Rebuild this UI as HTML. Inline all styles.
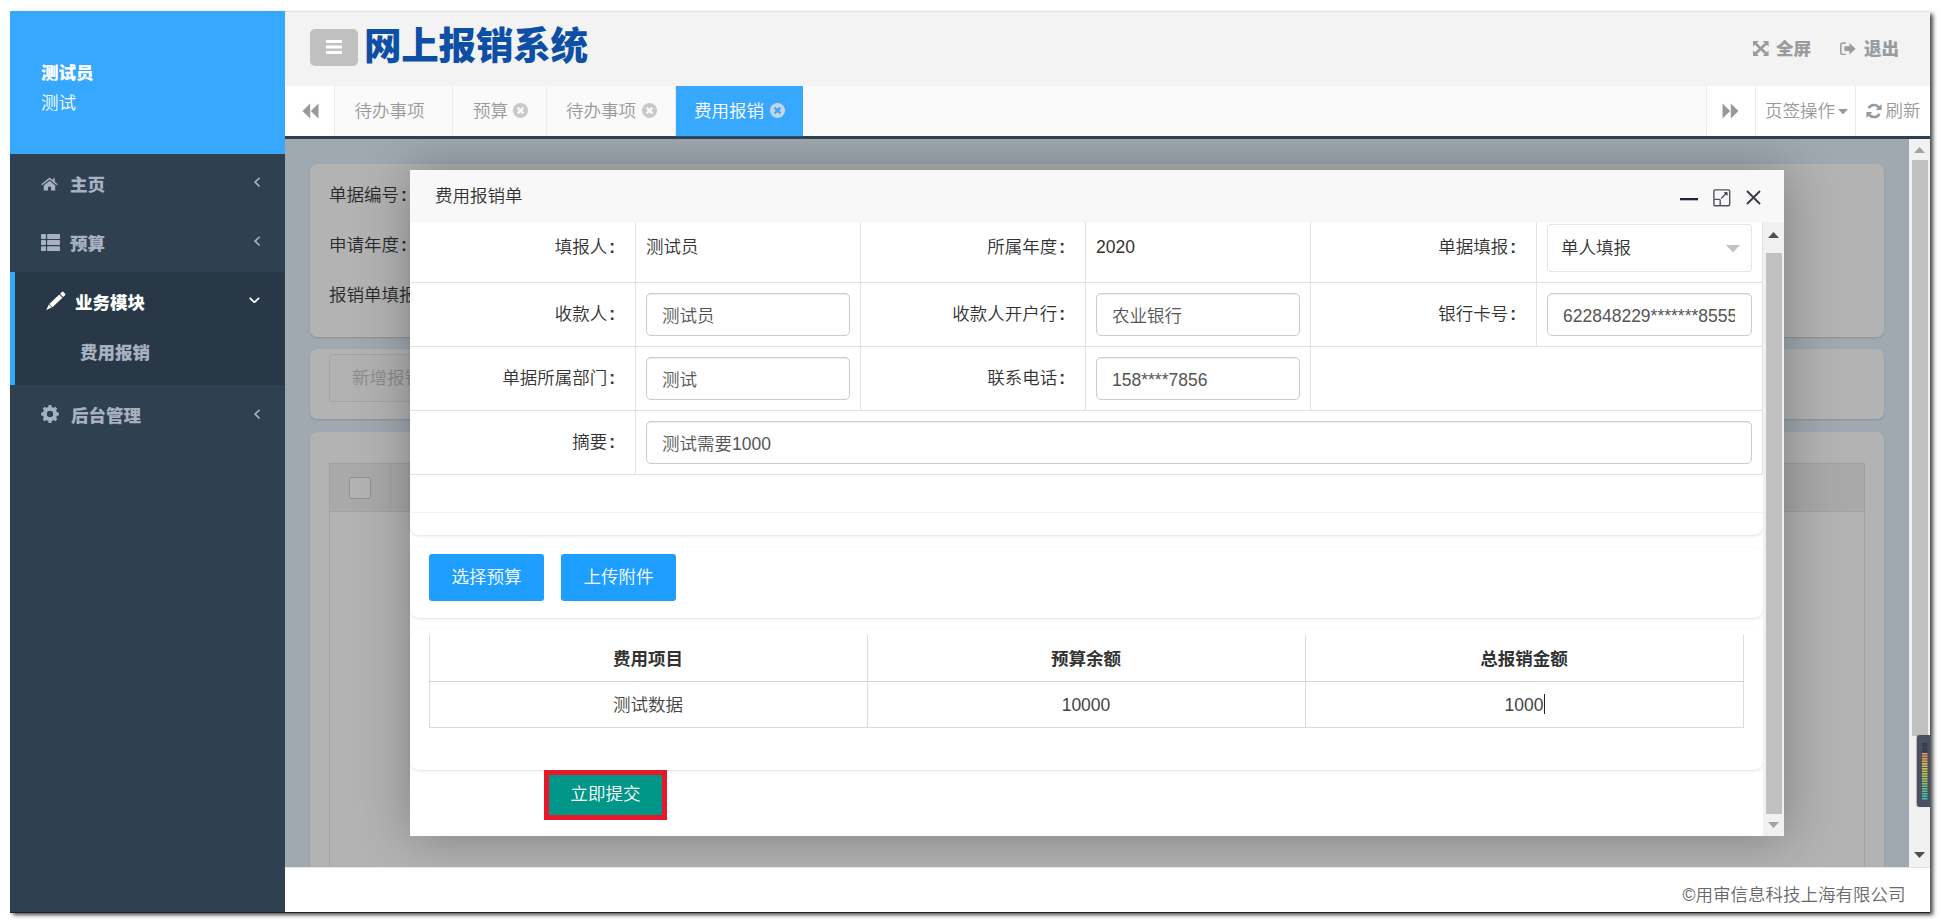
<!DOCTYPE html>
<html lang="zh-CN">
<head>
<meta charset="utf-8">
<title>网上报销系统</title>
<style>
*{box-sizing:border-box;margin:0;padding:0}
html,body{width:1941px;height:924px;overflow:hidden;background:#fff}
body{font-family:"Liberation Sans","Noto Sans CJK SC",sans-serif;font-size:17.5px;font-weight:350;color:#333;position:relative}
.abs{position:absolute}
#shot{position:absolute;left:10px;top:11px;width:1920px;height:901px;background:#fff;box-shadow:0 1px 0 #1d2327,3px 3px 4px 0 rgba(0,0,0,.72);overflow:hidden}
/* coordinates inside #shot are page coords minus (10,11) */
#side{left:0;top:0;width:275px;height:901px;background:#2f4050}
#prof{left:0;top:0;width:275px;height:143px;background:#36a9ff;color:#fff}
#prof b{position:absolute;left:31px;top:49px;line-height:26px;font-weight:900}
#prof span{position:absolute;left:31px;top:78.5px;line-height:26px}
.mi{left:0;width:275px;height:58px;color:#a7b1c2;font-weight:900;line-height:58px}
.mi svg{position:absolute}
.mi .t{position:absolute;top:0}
#act{left:0;top:261px;width:275px;height:113px;background:#293846;border-left:5px solid #36a9ff}
#head{left:275px;top:0;width:1645px;height:75px;background:#f3f3f4;border-top:1px solid #e2e2e2}
#burger{left:300px;top:18px;width:48px;height:37px;border-radius:5px;background:#c0c0c0}
#title{left:354px;top:9.5px;font-size:37.5px;line-height:50px;font-weight:900;color:#0e4fa6;white-space:nowrap;letter-spacing:-.2px}
.hr{color:#999c9e;font-weight:900;line-height:26px;white-space:nowrap}
#tabs{left:275px;top:75px;width:1645px;height:53px;background:#fafafa;border-bottom:3px solid #2f4050}
.tab{top:75px;height:50px;line-height:51px;color:#999;border-right:1px solid #ececec;white-space:nowrap}
.tabbtn{top:75px;height:50px;background:#fff}
#main{left:275px;top:128px;width:1624px;height:728px;background:#a0a8b0;overflow:hidden}
.card{background:#b3b3b3;border-radius:7px;box-shadow:0 1px 2px rgba(0,0,0,.14)}
#foot{left:275px;top:856px;width:1645px;height:45px;background:#fff;color:#676a6c;line-height:54px;text-align:right;padding-right:24.5px;border-top:1px solid #e4e4e4}
#vsb{left:1899px;top:128px;width:21px;height:728px;background:#f1f1f1}
#modal{left:125px;top:31px;width:1374px;height:666px;background:#fff;box-shadow:1px 1px 50px rgba(0,0,0,.3)}
#mtitle{left:0;top:0;width:1374px;height:53px;background:#f8f8f8;border-bottom:1px solid #eee;line-height:52px;padding-left:25px;color:#333}
.bl{color:#2a2a2a;line-height:26px;white-space:nowrap}

/* modal internals: coords relative to #modal (page x-410, y-170) */
.cd{position:absolute;left:0;width:1353px;background:#fff;border-radius:0 0 9px 9px;box-shadow:0 1px 3px 0 rgba(0,0,0,.13)}
.hl{position:absolute;left:0;width:1353px;height:1px;background:#e2e2e2}
.vl{position:absolute;width:1px;background:#e2e2e2}
.lb{position:absolute;width:205px;text-align:right;line-height:26px;color:#333;white-space:nowrap}
.vt{position:absolute;line-height:26px;color:#333;white-space:nowrap}
.in{position:absolute;width:204px;height:43px;border:1px solid #ccc;border-radius:5px;line-height:44px;padding-left:15px;color:#555;white-space:nowrap;overflow:hidden;box-shadow:inset 0 1px 1px rgba(0,0,0,.075);background:#fff}
.bt{position:absolute;top:384px;width:115px;height:47px;line-height:47px;text-align:center;background:#1e9fff;color:#fff;border-radius:3px;white-space:nowrap}
.th{position:absolute;top:465px;height:46px;line-height:48px;text-align:center;font-weight:700;color:#333}
.td{position:absolute;top:511px;height:46px;line-height:48px;text-align:center;color:#444}
i{font-style:normal;margin-left:2px;font-weight:700}
</style>
</head>
<body>
<div id="shot">
<div id="side" class="abs">
<div id="prof" class="abs"><b>测试员</b><span>测试</span></div>
<div class="mi abs" style="top:145px">
<svg style="left:31.4px;top:21px" width="17" height="14.2" viewBox="0 0 18 15"><path fill="#a7b1c2" d="M9 0.6 L0.3 7.6 L1.3 8.8 L9 2.6 L16.7 8.8 L17.7 7.6 L14.6 5.1 V1.4 H12.6 V3.5 Z M9 3.9 L2.9 8.9 V14.4 H7.4 V10.4 H10.6 V14.4 H15.1 V8.9 Z"/></svg>
<span class="t" style="left:60px">主页</span>
<svg style="left:244.2px;top:21.1px" width="6.4" height="10.2" viewBox="0 0 6.4 10.2"><path fill="none" stroke="#a7b1c2" stroke-width="1.6" d="M5.6 0.7 L1.1 5.1 L5.6 9.5"/></svg>
</div>
<div class="mi abs" style="top:203px">
<svg style="left:31px;top:20px" width="19" height="17.4" viewBox="0 0 19 17.4"><g fill="#a7b1c2"><rect x="0" y="0" width="5" height="5" rx=".9"/><rect x="6.1" y="0" width="12.9" height="5" rx=".9"/><rect x="0" y="6.1" width="5" height="5" rx=".9"/><rect x="6.1" y="6.1" width="12.9" height="5" rx=".9"/><rect x="0" y="12.2" width="5" height="5" rx=".9"/><rect x="6.1" y="12.2" width="12.9" height="5" rx=".9"/></g></svg>
<span class="t" style="left:60px;top:1px">预算</span>
<svg style="left:244.2px;top:22.1px" width="6.4" height="10.2" viewBox="0 0 6.4 10.2"><path fill="none" stroke="#a7b1c2" stroke-width="1.6" d="M5.6 0.7 L1.1 5.1 L5.6 9.5"/></svg>
</div>
<div id="act" class="abs"></div>
<div class="mi abs" style="top:263px;color:#fff">
<svg style="left:36px;top:17px;overflow:visible" width="21" height="20" viewBox="0 0 21 20"><g transform="translate(0.2,19) rotate(-43.5)" fill="#fff"><path d="M0 0 L5.7 -2.1 V2.1 Z"/><path fill="#293846" d="M0 0 L1.9 -.7 V.7 Z" opacity=".0"/><rect x="6.4" y="-2.3" width="13.8" height="4.6"/><rect x="21.1" y="-2.3" width="3.8" height="4.6" rx="1.1"/></g></svg>
<span class="t" style="left:65px">业务模块</span>
<svg style="left:239.4px;top:22.8px" width="10.8" height="6.4" viewBox="0 0 10.8 6.4"><path fill="none" stroke="#fff" stroke-width="1.7" d="M0.7 0.8 L5.4 5.4 L10.1 0.8"/></svg>
</div>
<div class="mi abs" style="top:317px;height:50px;line-height:50px"><span class="t" style="left:70px">费用报销</span></div>
<div class="mi abs" style="top:376px">
<svg style="left:31px;top:18px" width="18" height="18" viewBox="0 0 18 18"><path fill="#a7b1c2" fill-rule="evenodd" d="M7.10 2.50 L7.65 0.10 L10.35 0.10 L10.90 2.50 L12.25 3.06 L14.34 1.75 L16.25 3.66 L14.94 5.75 L15.50 7.10 L17.90 7.65 L17.90 10.35 L15.50 10.90 L14.94 12.25 L16.25 14.34 L14.34 16.25 L12.25 14.94 L10.90 15.50 L10.35 17.90 L7.65 17.90 L7.10 15.50 L5.75 14.94 L3.66 16.25 L1.75 14.34 L3.06 12.25 L2.50 10.90 L0.10 10.35 L0.10 7.65 L2.50 7.10 L3.06 5.75 L1.75 3.66 L3.66 1.75 L5.75 3.06 Z M9 5.8 A3.2 3.2 0 1 0 9 12.2 A3.2 3.2 0 1 0 9 5.8 Z"/><circle cx="9" cy="9" r="5.2" fill="none" stroke="#a7b1c2" stroke-width="3.6"/></svg>
<span class="t" style="left:61px">后台管理</span>
<svg style="left:244.2px;top:21.7px" width="6.4" height="10.2" viewBox="0 0 6.4 10.2"><path fill="none" stroke="#a7b1c2" stroke-width="1.6" d="M5.6 0.7 L1.1 5.1 L5.6 9.5"/></svg>
</div>
</div>
<div id="head" class="abs"></div>
<div id="burger" class="abs"><svg class="abs" style="left:16px;top:11px" width="16" height="14" viewBox="0 0 16 14"><path fill="#fff" d="M0 0H16V3H0Z M0 5.5H16V8.5H0Z M0 11H16V14H0Z"/></svg></div>
<div id="title" class="abs">网上报销系统</div>
<svg class="abs" style="left:1743px;top:30px" width="15.6" height="15" viewBox="0 0 16 16" preserveAspectRatio="none"><path fill="#999c9e" d="M0 0H6L4 2L8 6L12 2L10 0H16V6L14 4L10 8L14 12L16 10V16H10L12 14L8 10L4 14L6 16H0V10L2 12L6 8L2 4L0 6Z"/></svg>
<div class="hr abs" style="left:1766px;top:25px">全屏</div>
<svg class="abs" style="left:1830px;top:31px" width="16" height="13.4" viewBox="0 0 16 13.4"><path fill="none" stroke="#999c9e" stroke-width="1.5" d="M6 0.9H3A2.2 2.2 0 0 0 0.8 3.1V10.3A2.2 2.2 0 0 0 3 12.5H6"/><path fill="#999c9e" d="M4.4 4.3H9.4V1L15.6 6.7L9.4 12.4V9.1H4.4Z"/></svg>
<div class="hr abs" style="left:1854px;top:25px">退出</div>
<div id="tabs" class="abs"></div>
<div class="tabbtn abs" style="left:275px;width:50px;border-right:1px solid #ececec"><svg class="abs" style="left:17px;top:16.5px" width="17" height="16" viewBox="0 0 17 16"><path fill="#999" d="M8.2 0.5V15.5L0.5 8Z M16.5 0.5V15.5L8.8 8Z"/></svg></div>
<div class="tab abs" style="left:325px;width:118px;padding-left:19.5px">待办事项</div>
<div class="tab abs" style="left:443px;width:94px;padding-left:20px">预算</div>
<svg class="abs" style="left:502px;top:91px" width="17" height="17" viewBox="0 0 17 17"><circle cx="8.5" cy="8.5" r="7.6" fill="#c9c9c9"/><path stroke="#fafafa" stroke-width="2.2" stroke-linecap="butt" d="M5.6 5.6 L11.4 11.4 M11.4 5.6 L5.6 11.4"/></svg>
<div class="tab abs" style="left:537px;width:129px;padding-left:19px">待办事项</div>
<svg class="abs" style="left:631px;top:91px" width="17" height="17" viewBox="0 0 17 17"><circle cx="8.5" cy="8.5" r="7.6" fill="#c9c9c9"/><path stroke="#fafafa" stroke-width="2.2" stroke-linecap="butt" d="M5.6 5.6 L11.4 11.4 M11.4 5.6 L5.6 11.4"/></svg>
<div class="tab abs" style="left:666px;width:127px;padding-left:18px;background:#36a9ff;color:#fff;border-right:0">费用报销</div>
<svg class="abs" style="left:759px;top:91px" width="17" height="17" viewBox="0 0 17 17"><circle cx="8.5" cy="8.5" r="7.6" fill="#c4d4e2"/><path stroke="#36a9ff" stroke-width="2.2" stroke-linecap="butt" d="M5.6 5.6 L11.4 11.4 M11.4 5.6 L5.6 11.4"/></svg>
<div class="abs" style="left:666px;top:125px;width:127px;height:1px;background:#23527a"></div>
<div class="tabbtn abs" style="left:1696px;width:49px;border-left:1px solid #ececec"><svg class="abs" style="left:15px;top:17px" width="17" height="16" viewBox="0 0 17 16"><path fill="#999" d="M0.5 0.5V15.5L8.2 8Z M8.8 0.5V15.5L16.5 8Z"/></svg></div>
<div class="tabbtn abs" style="left:1745px;width:100px;border-left:1px solid #ececec;color:#999;line-height:51px;padding-left:9px">页签操作<svg class="abs" style="left:82px;top:23px" width="10" height="6" viewBox="0 0 10 6"><path fill="#999" d="M0 0H10L5 5.5Z"/></svg></div>
<div class="tabbtn abs" style="left:1845px;width:75px;border-left:1px solid #ececec;color:#999;line-height:51px;padding-left:29.5px">刷新<svg class="abs" style="left:10px;top:17px" width="16" height="16" viewBox="0 0 16 16"><path fill="none" stroke="#999" stroke-width="2.6" d="M13.6 6A6 6 0 0 0 2.6 5.2 M2.4 10A6 6 0 0 0 13.4 10.8"/><path fill="#999" d="M15.6 1V7H9.6Z M0.4 15V9H6.4Z"/></svg></div>
<div id="main" class="abs">
<div class="card abs" style="left:25px;top:25px;width:1574px;height:173px">
<div class="abs bl" style="left:19px;top:18px">单据编号<i>:</i></div>
<div class="abs bl" style="left:19px;top:68px">申请年度<i>:</i></div>
<div class="abs bl" style="left:19px;top:118px">报销单填报<i>:</i></div>
</div>
<div class="card abs" style="left:25px;top:210px;width:1574px;height:70px">
<div class="abs" style="left:19px;top:5px;width:160px;height:48px;border:1px solid #a4a4a4;border-radius:3px;color:#8b8b8b;line-height:47px;padding-left:22px;background:#b1b1b1">新增报销单</div>
</div>
<div class="card abs" style="left:25px;top:293px;width:1574px;height:460px">
<div class="abs" style="left:19px;top:31px;width:1536px;height:440px;border:1px solid #a3a3a3"></div>
<div class="abs" style="left:19px;top:31px;width:1536px;height:49px;background:#a9a9a9;border:1px solid #a0a0a0"></div>
<div class="abs" style="left:80px;top:31px;width:1px;height:49px;background:#a0a0a0"></div>
<div class="abs" style="left:39px;top:45px;width:22px;height:22px;border:1px solid #909090;border-radius:3px;background:#b3b3b3"></div>
</div>
<div id="modal" class="abs">
<div id="mtitle" class="abs">费用报销单</div>
<svg class="abs" style="left:1270px;top:27.7px" width="18" height="3" viewBox="0 0 18 3"><rect width="18" height="2.3" fill="#23222e"/></svg>
<svg class="abs" style="left:1303px;top:19px" width="18" height="18" viewBox="0 0 18 18"><g fill="none" stroke="#50525c" stroke-width="1.4"><path d="M7.2 16.7H15.2Q16.7 16.7 16.7 15.2V2.4Q16.7 0.9 15.2 0.9H2.4Q0.9 0.9 0.9 2.4V10.4"/><rect x="0.9" y="10.4" width="6.3" height="6.3" rx="1"/><path d="M8.2 9.4L14 3.6"/></g><path fill="#3c3d4a" d="M10.6 3.2H14.5V7.1Z"/></svg>
<svg class="abs" style="left:1336px;top:20px" width="15" height="15" viewBox="0 0 15 15"><path fill="none" stroke="#383846" stroke-width="1.8" d="M1 1L14 14M14 1L1 14"/></svg>
<!--cards-->
<div class="cd" style="top:52px;height:313px"></div>
<div class="cd" style="top:377px;height:71px;border-radius:9px"></div>
<div class="cd" style="top:459px;height:141px;border-radius:9px"></div>
<!--form grid-->
<div class="hl" style="top:112px"></div><div class="hl" style="top:176px"></div><div class="hl" style="top:240px"></div><div class="hl" style="top:304px"></div>
<div class="hl" style="top:342px;background:#f3f3f3"></div>
<div class="vl" style="left:225px;top:52px;height:253px"></div>
<div class="vl" style="left:450px;top:52px;height:189px"></div>
<div class="vl" style="left:675px;top:52px;height:189px"></div>
<div class="vl" style="left:900px;top:52px;height:189px"></div>
<div class="vl" style="left:1126px;top:52px;height:125px"></div>
<div class="vl" style="left:1352px;top:52px;height:253px"></div>
<div class="lb" style="left:0;top:64px">填报人<i>:</i></div><div class="vt" style="left:236px;top:64px">测试员</div>
<div class="lb" style="left:450px;top:64px">所属年度<i>:</i></div><div class="vt" style="left:686px;top:64px">2020</div>
<div class="lb" style="left:901px;top:64px">单据填报<i>:</i></div>
<div class="in" style="left:1137px;top:54px;width:205px;height:48px;line-height:46px;border-color:#e6e6e6;border-radius:3px;box-shadow:none;color:#333;padding-left:13px">单人填报<svg class="abs" style="left:178px;top:20px" width="14" height="8" viewBox="0 0 14 8"><path fill="#c2c2c2" d="M0 0H14L7 7.5Z"/></svg></div>
<div class="lb" style="left:0;top:131px">收款人<i>:</i></div><div class="in" style="left:236px;top:123px">测试员</div>
<div class="lb" style="left:450px;top:131px">收款人开户行<i>:</i></div><div class="in" style="left:686px;top:123px">农业银行</div>
<div class="lb" style="left:901px;top:131px">银行卡号<i>:</i></div><div class="in" style="left:1137px;top:123px;width:205px"><span style="display:block;width:172px;overflow:hidden">622848229*******8555</span></div>
<div class="lb" style="left:0;top:195px">单据所属部门<i>:</i></div><div class="in" style="left:236px;top:187px">测试</div>
<div class="lb" style="left:450px;top:195px">联系电话<i>:</i></div><div class="in" style="left:686px;top:187px">158****7856</div>
<div class="lb" style="left:0;top:259px">摘要<i>:</i></div><div class="in" style="left:236px;top:251px;width:1106px">测试需要1000</div>
<!--buttons-->
<div class="bt" style="left:19px">选择预算</div><div class="bt" style="left:151px">上传附件</div>
<!--table-->
<div class="abs" style="left:19px;top:465px;width:1315px;height:93px;border:1px solid #dcdcdc;border-top:0"></div>
<div class="abs" style="left:19px;top:511px;width:1315px;height:1px;background:#d4d4d4"></div>
<div class="vl" style="left:457px;top:465px;height:92px;background:#dcdcdc"></div>
<div class="vl" style="left:895px;top:465px;height:92px;background:#dcdcdc"></div>
<div class="th" style="left:19px;width:438px">费用项目</div><div class="th" style="left:457px;width:438px">预算余额</div><div class="th" style="left:895px;width:438px">总报销金额</div>
<div class="td" style="left:19px;width:438px">测试数据</div><div class="td" style="left:457px;width:438px">10000</div><div class="td" style="left:895px;width:438px">1000</div>
<div class="abs" style="left:1134px;top:524px;width:1px;height:20px;background:#222"></div>
<!--submit-->
<div class="abs" style="left:134px;top:600px;width:123px;height:50px;border:5px solid #e8172b;background:#009688;color:#fff;text-align:center;line-height:39px">立即提交</div>
<!--scrollbar-->
<div class="abs" style="left:1353px;top:52px;width:21px;height:614px;background:#f1f1f1">
<svg class="abs" style="left:5px;top:9.5px" width="11" height="6" viewBox="0 0 11 6"><path fill="#505050" d="M0 6H11L5.5 0Z"/></svg>
<div class="abs" style="left:3px;top:31px;width:16px;height:561px;background:#c1c1c1"></div>
<svg class="abs" style="left:5px;top:600px" width="11" height="6" viewBox="0 0 11 6"><path fill="#a3a3a3" d="M0 0H11L5.5 6Z"/></svg>
</div>
</div>
</div>
<div id="vsb" class="abs">
<svg class="abs" style="left:5px;top:8px" width="11" height="6" viewBox="0 0 11 6"><path fill="#a3a3a3" d="M0 6H11L5.5 0Z"/></svg>
<div class="abs" style="left:3px;top:21px;width:16px;height:576px;background:#c1c1c1"></div>
<svg class="abs" style="left:5px;top:713px" width="11" height="6" viewBox="0 0 11 6"><path fill="#505050" d="M0 0H11L5.5 6Z"/></svg>
</div>
<div id="foot" class="abs">©用审信息科技上海有限公司</div>
<div class="abs" style="left:1907px;top:724px;width:13px;height:72px;background:#4a4f61;border-radius:3px 0 0 3px;box-shadow:-1px 0 1px rgba(0,0,0,.25)"><svg class="abs" style="left:5px;top:7.7px" width="6" height="58" viewBox="0 0 6 58"><rect x="0" y="0.0" width="5.5" height="1.6" fill="rgb(52, 57, 72)"/><rect x="0" y="2.5" width="5.5" height="1.6" fill="rgb(52, 57, 72)"/><rect x="0" y="5.0" width="5.5" height="1.6" fill="rgb(52, 57, 72)"/><rect x="0" y="7.5" width="5.5" height="1.6" fill="rgb(52, 57, 72)"/><rect x="0" y="10.0" width="5.5" height="1.6" fill="rgb(232, 144, 92)"/><rect x="0" y="12.5" width="5.5" height="1.6" fill="rgb(231, 155, 87)"/><rect x="0" y="15.0" width="5.5" height="1.6" fill="rgb(230, 166, 81)"/><rect x="0" y="17.5" width="5.5" height="1.6" fill="rgb(229, 177, 76)"/><rect x="0" y="20.0" width="5.5" height="1.6" fill="rgb(228, 188, 71)"/><rect x="0" y="22.5" width="5.5" height="1.6" fill="rgb(222, 195, 69)"/><rect x="0" y="25.0" width="5.5" height="1.6" fill="rgb(211, 197, 71)"/><rect x="0" y="27.5" width="5.5" height="1.6" fill="rgb(201, 200, 72)"/><rect x="0" y="30.0" width="5.5" height="1.6" fill="rgb(190, 202, 74)"/><rect x="0" y="32.5" width="5.5" height="1.6" fill="rgb(180, 204, 76)"/><rect x="0" y="35.0" width="5.5" height="1.6" fill="rgb(164, 201, 86)"/><rect x="0" y="37.5" width="5.5" height="1.6" fill="rgb(148, 199, 96)"/><rect x="0" y="40.0" width="5.5" height="1.6" fill="rgb(132, 196, 105)"/><rect x="0" y="42.5" width="5.5" height="1.6" fill="rgb(116, 193, 115)"/><rect x="0" y="45.0" width="5.5" height="1.6" fill="rgb(101, 192, 127)"/><rect x="0" y="47.5" width="5.5" height="1.6" fill="rgb(87, 193, 141)"/><rect x="0" y="50.0" width="5.5" height="1.6" fill="rgb(72, 194, 156)"/><rect x="0" y="52.5" width="5.5" height="1.6" fill="rgb(58, 195, 170)"/><rect x="0" y="55.0" width="5.5" height="1.6" fill="rgb(44, 196, 184)"/></svg></div>
</div>
</body>
</html>
